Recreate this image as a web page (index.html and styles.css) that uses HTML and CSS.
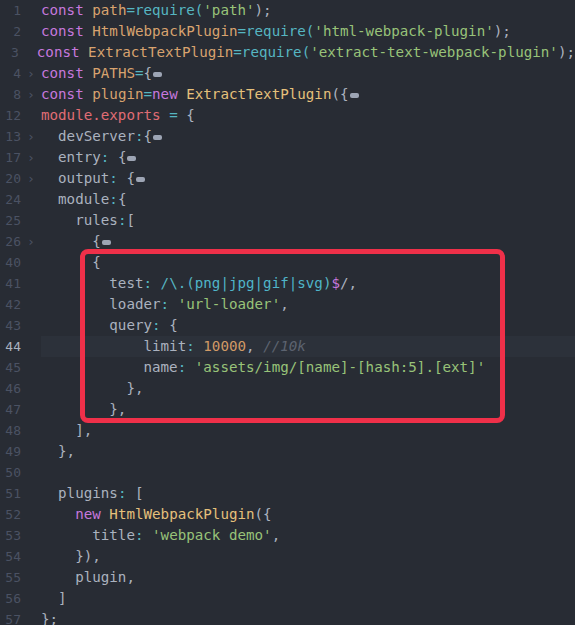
FILE: index.html
```html
<!DOCTYPE html>
<html lang="en">
<head>
    <meta charset="UTF-8">
    <meta name="viewport" content="width=device-width, initial-scale=1.0">
    <title>webpack.config.js</title>
    <link rel="stylesheet" href="styles.css">
</head>
<body>
    <div class="editor">
        <div class="line"><span class="ln">1</span><span class="fold"></span><span class="code"><span class="kw">const</span> <span class="var">path</span><span class="op">=require(</span><span class="str">'path'</span>);</span></div>
        <div class="line"><span class="ln">2</span><span class="fold"></span><span class="code"><span class="kw">const</span> <span class="var">HtmlWebpackPlugin</span><span class="op">=require(</span><span class="str">'html-webpack-plugin'</span>);</span></div>
        <div class="line"><span class="ln">3</span><span class="fold"></span><span class="code"><span class="kw">const</span> <span class="var">ExtractTextPlugin</span><span class="op">=require(</span><span class="str">'extract-text-webpack-plugin'</span>);</span></div>
        <div class="line"><span class="ln">4</span><span class="fold">›</span><span class="code"><span class="kw">const</span> <span class="var">PATHS</span><span class="op">=</span>{<span class="dots"></span></span></div>
        <div class="line"><span class="ln">8</span><span class="fold">›</span><span class="code"><span class="kw">const</span> <span class="var">plugin</span><span class="op">=</span><span class="kw">new</span> <span class="cls">ExtractTextPlugin</span>({<span class="dots"></span></span></div>
        <div class="line"><span class="ln">12</span><span class="fold"></span><span class="code"><span class="mod">module.exports</span> <span class="op">=</span> {</span></div>
        <div class="line"><span class="ln">13</span><span class="fold">›</span><span class="code">  devServer<span class="op">:</span>{<span class="dots"></span></span></div>
        <div class="line"><span class="ln">17</span><span class="fold">›</span><span class="code">  entry<span class="op">:</span> {<span class="dots"></span></span></div>
        <div class="line"><span class="ln">20</span><span class="fold">›</span><span class="code">  output<span class="op">:</span> {<span class="dots"></span></span></div>
        <div class="line"><span class="ln">24</span><span class="fold"></span><span class="code">  module<span class="op">:</span>{</span></div>
        <div class="line"><span class="ln">25</span><span class="fold"></span><span class="code">    rules<span class="op">:</span>[</span></div>
        <div class="line"><span class="ln">26</span><span class="fold">›</span><span class="code">      {<span class="dots"></span></span></div>
        <div class="line"><span class="ln">40</span><span class="fold"></span><span class="code">      {</span></div>
        <div class="line"><span class="ln">41</span><span class="fold"></span><span class="code">        test<span class="op">:</span> <span class="re">/\.(</span><span class="re-in">png|jpg|gif|svg</span><span class="re">)</span><span class="kw">$</span>/,</span></div>
        <div class="line"><span class="ln">42</span><span class="fold"></span><span class="code">        loader<span class="op">:</span> <span class="str">'url-loader'</span>,</span></div>
        <div class="line"><span class="ln">43</span><span class="fold"></span><span class="code">        query<span class="op">:</span> {</span></div>
        <div class="line current"><span class="ln">44</span><span class="fold"></span><span class="code">            limit<span class="op">:</span> <span class="num">10000</span>, <span class="cmt">//10k</span></span></div>
        <div class="line"><span class="ln">45</span><span class="fold"></span><span class="code">            name<span class="op">:</span> <span class="str">'assets/img/[name]-[hash:5].[ext]'</span></span></div>
        <div class="line"><span class="ln">46</span><span class="fold"></span><span class="code">          },</span></div>
        <div class="line"><span class="ln">47</span><span class="fold"></span><span class="code">        },</span></div>
        <div class="line"><span class="ln">48</span><span class="fold"></span><span class="code">    ],</span></div>
        <div class="line"><span class="ln">49</span><span class="fold"></span><span class="code">  },</span></div>
        <div class="line"><span class="ln">50</span><span class="fold"></span><span class="code"></span></div>
        <div class="line"><span class="ln">51</span><span class="fold"></span><span class="code">  plugins<span class="op">:</span> [</span></div>
        <div class="line"><span class="ln">52</span><span class="fold"></span><span class="code">    <span class="kw">new</span> <span class="cls">HtmlWebpackPlugin</span>({</span></div>
        <div class="line"><span class="ln">53</span><span class="fold"></span><span class="code">      title<span class="op">:</span> <span class="str">'webpack demo'</span>,</span></div>
        <div class="line"><span class="ln">54</span><span class="fold"></span><span class="code">    }),</span></div>
        <div class="line"><span class="ln">55</span><span class="fold"></span><span class="code">    plugin,</span></div>
        <div class="line"><span class="ln">56</span><span class="fold"></span><span class="code">  ]</span></div>
        <div class="line"><span class="ln">57</span><span class="fold"></span><span class="code">};</span></div>

        <div class="mark"></div>
    </div>
</body>
</html>
```

FILE: styles.css
```css
html, body {
    margin: 0;
    padding: 0;
    background-color: #282c34;
    overflow: hidden;
}
.editor {
    position: relative;
    height: 625px;
    font-family: "DejaVu Sans Mono", "Liberation Mono", monospace;
    font-size: 14.2px;
    color: #abb2bf;
}
.line {
    display: flex;
    height: 21px;
    line-height: 21px;
    white-space: pre;
}
.ln {
    width: 21px;
    text-align: right;
    color: #4b5263;
    font-size: 13px;
}
.fold {
    width: 20px;
    text-align: center;
    color: #4b5263;
    font-size: 13px;
}
.code {
    flex: 1;
}
.current .code {
    background-color: #2c313a;
}
.current .ln {
    color: #abb2bf;
}
.kw { color: #c678dd; }
.var { color: #d8a36f; }
.cls { color: #e5c07b; }
.op { color: #56b6c2; }
.str { color: #98c379; }
.mod { color: #e06c75; }
.num { color: #d19a66; }
.re { color: #56b6c2; }
.re-in { color: #4fb5c9; }
.cmt {
    color: #5c6370;
    font-style: italic;
}
.dots {
    display: inline-block;
    width: 9px;
    height: 5px;
    margin-left: 1px;
    border-radius: 2px;
    background-color: #9da5b4;
    vertical-align: middle;
}
.mark {
    position: absolute;
    left: 80px;
    top: 249px;
    width: 415px;
    height: 164px;
    border: 5px solid #ef3049;
    border-radius: 8px;
}
```
